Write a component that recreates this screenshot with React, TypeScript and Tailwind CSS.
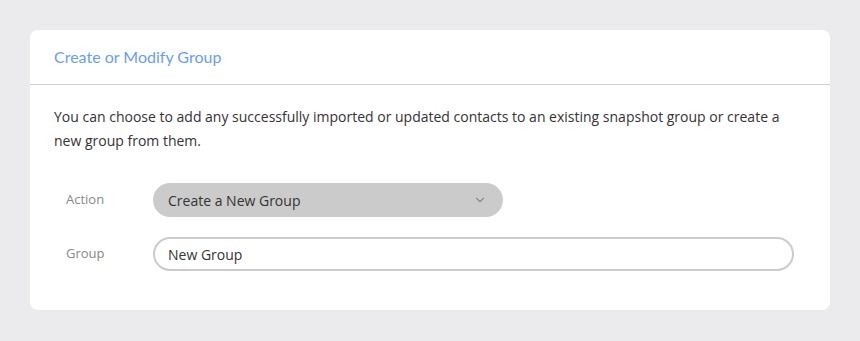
import { ChevronDown } from "lucide-react";

export default function App() {
  return (
    <div className="min-h-[341px] bg-[#ebebed] px-[30px] pt-[30px] pb-[31px] font-['Open_Sans',sans-serif]">
      <div className="rounded-lg bg-white">
        <div className="flex h-[55px] items-center border-b border-[#d0d0d0] px-6">
          <h2 className="font-['Lato',sans-serif] text-[16px] text-[#6b9cf5]">Create or Modify Group</h2>
        </div>
        <div className="px-6 pt-[20px] pb-[39px]">
          <p className="text-[14px] leading-6 text-[#333]">
            You can choose to add any successfully imported or updated contacts to an existing snapshot group or create a
            new group from them.
          </p>
          <div className="mt-[30px] flex flex-col gap-5">
            <div className="flex items-center">
              <label className="w-[99px] pl-3 text-[13px] text-[#888]">Action</label>
              <div className="flex h-[34px] w-[350px] items-center justify-between rounded-full bg-[#cbcbcb] pl-[15px] pr-[16px]">
                <span className="text-[14px] text-[#333]">Create a New Group</span>
                <ChevronDown className="h-3.5 w-3.5 text-[#8a8a8a]" strokeWidth={2} />
              </div>
            </div>
            <div className="flex items-center">
              <label className="w-[99px] pl-3 text-[13px] text-[#888]">Group</label>
              <div className="flex h-[34px] w-[641px] items-center rounded-full border-2 border-[#cbcbcb] pl-[13px]">
                <span className="text-[14px] text-[#333]">New Group</span>
              </div>
            </div>
          </div>
        </div>
      </div>
    </div>
  );
}
